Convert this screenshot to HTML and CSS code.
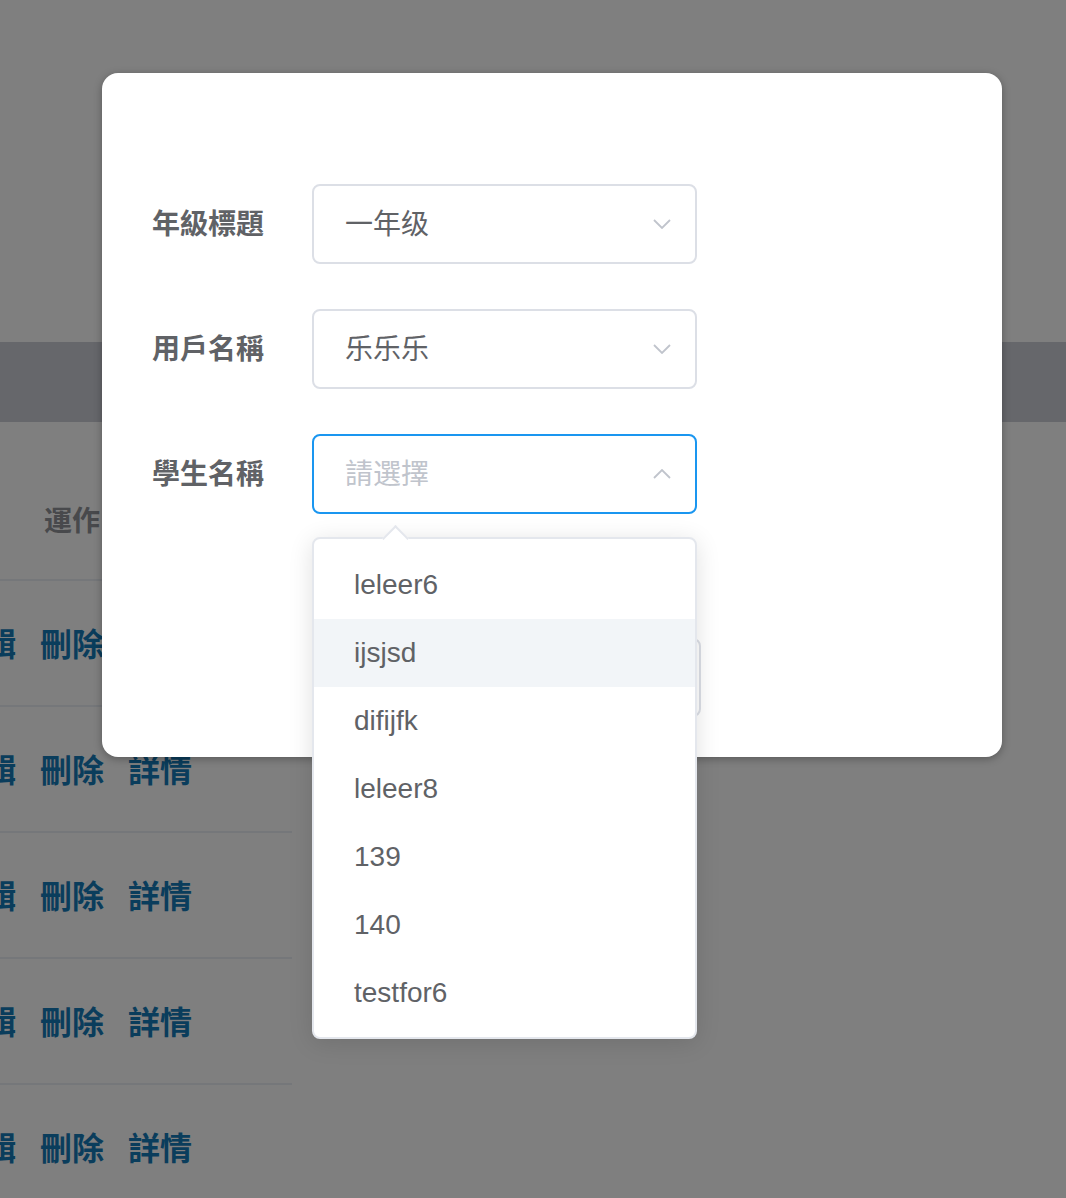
FILE: index.html
```html
<!DOCTYPE html>
<html lang="zh">
<head>
  <meta charset="UTF-8">
  <title>學生管理</title>
  <link rel="stylesheet" href="styles.css">
</head>
<body>
  <!-- Page behind the dialog -->
  <div class="page">
    <div class="toolbar"></div>
    <div class="table">
      <div class="row head"><div class="cell">運作</div></div>
      <div class="row"><div class="cell ops"><a>編輯</a><a>刪除</a><a>詳情</a></div></div>
      <div class="row"><div class="cell ops"><a>編輯</a><a>刪除</a><a>詳情</a></div></div>
      <div class="row"><div class="cell ops"><a>編輯</a><a>刪除</a><a>詳情</a></div></div>
      <div class="row"><div class="cell ops"><a>編輯</a><a>刪除</a><a>詳情</a></div></div>
      <div class="row"><div class="cell ops"><a>編輯</a><a>刪除</a><a>詳情</a></div></div>
    </div>
  </div>

  <div class="mask"></div>

  <div class="dialog">
    <div class="form">
      <div class="form-item">
        <label class="label">年級標題</label>
        <div class="select">
          <span class="value">一年级</span>
          <svg class="arrow" width="18" height="10" viewBox="0 0 18 10"><polyline points="1,1 9,9 17,1" /></svg>
        </div>
      </div>
      <div class="form-item">
        <label class="label">用戶名稱</label>
        <div class="select">
          <span class="value">乐乐乐</span>
          <svg class="arrow" width="18" height="10" viewBox="0 0 18 10"><polyline points="1,1 9,9 17,1" /></svg>
        </div>
      </div>
      <div class="form-item">
        <label class="label">學生名稱</label>
        <div class="select focused">
          <span class="value placeholder">請選擇</span>
          <svg class="arrow" width="18" height="10" viewBox="0 0 18 10"><polyline points="1,9 9,1 17,9" /></svg>
        </div>
      </div>
      <div class="form-item extra">
        <div class="box"></div>
      </div>
    </div>
  </div>

  <!-- Open select dropdown -->
  <div class="dropdown">
    <div class="popper-arrow"></div>
    <ul class="options">
      <li>leleer6</li>
      <li class="hover">ijsjsd</li>
      <li>difijfk</li>
      <li>leleer8</li>
      <li>139</li>
      <li>140</li>
      <li>testfor6</li>
    </ul>
  </div>
</body>
</html>
```

FILE: styles.css
```css
body {
  margin: 0;
  height: 1198px;
  overflow: hidden;
  background: #fff;
  font-family: "Liberation Sans", "Noto Sans CJK SC", sans-serif;
  position: relative;
}
/* Background page */
.page {
  padding-top: 342px;
}
.toolbar {
  height: 80px;
  background: #cdcfd6;
}
.table {
  width: 340px;
  margin-left: -48px;
  margin-top: 39px;
}
.row {
  box-sizing: border-box;
  height: 126px;
  border-bottom: 2px solid #ebeef5;
  display: flex;
  align-items: center;
}
.row.head {
  height: 120px;
}
.cell {
  width: 240px;
  text-align: center;
  font-size: 28px;
  font-weight: 700;
  color: #909399;
  margin-bottom: 3px;
}
.ops {
  display: flex;
  gap: 24px;
  font-size: 32px;
}
.ops a {
  color: #157ab8;
}
/* Modal overlay */
.mask {
  position: absolute;
  inset: 0;
  background: rgba(0,0,0,0.5);
}
.dialog {
  position: absolute;
  top: 73px;
  left: 102px;
  width: 900px;
  box-sizing: border-box;
  padding: 111px 0 40px 50px;
  background: #fff;
  border-radius: 16px;
  box-shadow: 0 2px 8px rgba(0,0,0,0.3);
}
.form {
  display: flex;
  flex-direction: column;
  gap: 45px;
}
.form-item {
  display: flex;
  align-items: center;
  height: 80px;
}
.form-item.extra {
  margin-top: 79px;
  height: 79px;
}
.label {
  width: 160px;
  font-size: 28px;
  font-weight: 600;
  color: #606266;
  margin-bottom: 4px;
}
.select {
  box-sizing: border-box;
  width: 385px;
  height: 80px;
  border: 2px solid #dcdfe6;
  border-radius: 8px;
  padding: 0 24px 0 31px;
  display: flex;
  align-items: center;
  justify-content: space-between;
}
.select.focused {
  border-color: #1a96f0;
}
.value {
  font-size: 28px;
  color: #606266;
  margin-bottom: 4px;
}
.value.placeholder {
  color: #c0c4cc;
}
.arrow polyline {
  fill: none;
  stroke: #c0c4cc;
  stroke-width: 1.8;
}
.extra .box {
  margin-left: 160px;
  box-sizing: border-box;
  width: 389px;
  height: 79px;
  border: 2px solid #dcdfe6;
  border-radius: 8px;
}
/* Dropdown popper */
.dropdown {
  position: absolute;
  top: 537px;
  left: 312px;
  width: 385px;
  box-sizing: border-box;
  border: 2px solid #e4e7ed;
  border-radius: 8px;
  background: #fff;
  box-shadow: 0 4px 24px rgba(0,0,0,0.12);
}
.popper-arrow {
  position: absolute;
  top: -10px;
  left: 72px;
  width: 17px;
  height: 17px;
  background: #fff;
  border-top: 2px solid #e4e7ed;
  border-left: 2px solid #e4e7ed;
  transform: rotate(45deg);
}
.options {
  position: relative;
  list-style: none;
  margin: 0;
  padding: 12px 0 10px;
}
.options li {
  height: 68px;
  line-height: 68px;
  padding: 0 40px;
  font-size: 28px;
  color: #606266;
}
.options li.hover {
  background: #f2f5f8;
}
```
